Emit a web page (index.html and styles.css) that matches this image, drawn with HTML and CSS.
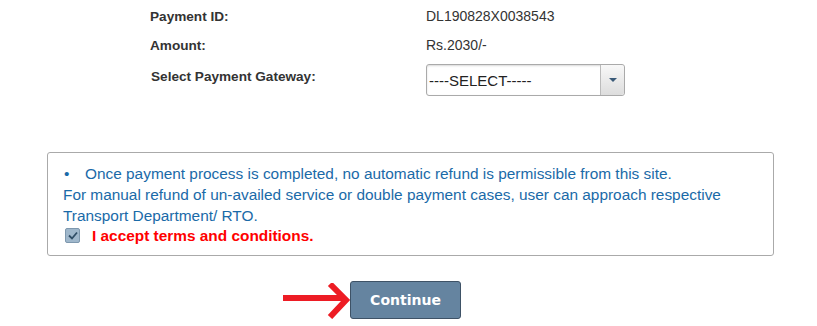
FILE: index.html
```html
<!DOCTYPE html>
<html>
<head>
<meta charset="utf-8">
<link rel="stylesheet" href="styles.css">
</head>
<body>
<div class="page">
  <div class="details">
    <div class="row"><div class="label">Payment ID:</div><div class="value">DL190828X0038543</div></div>
    <div class="row"><div class="label">Amount:</div><div class="value">Rs.2030/-</div></div>
    <div class="row gw"><div class="label">Select Payment Gateway:</div>
      <div class="select"><span class="sel-text">----SELECT-----</span><span class="sel-btn"><span class="caret"></span></span></div>
    </div>
  </div>
  <div class="notice">
    <div class="bullet"><span class="dot">•</span>Once payment process is completed, no automatic refund is permissible from this site.</div>
    <div class="para">For manual refund of un-availed service or double payment cases, user can approach respective Transport Department/ RTO.</div>
    <div class="accept"><span class="check"><svg width="10" height="9" viewBox="0 0 10 9"><path d="M1 4.5 L4 7.5 L9 1.5" fill="none" stroke="#2f4d66" stroke-width="1.8"/></svg></span><span class="terms">I accept terms and conditions.</span></div>
  </div>
  <div class="actions">
    <svg class="arrow" width="68" height="36" viewBox="0 0 68 36"><path d="M0 15 H60" stroke="#ed1c24" stroke-width="6"/><path d="M47 1 L63 17 L47 34" fill="none" stroke="#ed1c24" stroke-width="6"/></svg>
    <button class="btn">Continue</button>
  </div>
</div>
</body>
</html>
```
FILE: styles.css
```css
html, body { margin: 0; padding: 0; background: #fff; }
body { font-family: "Liberation Sans", Arial, sans-serif; width: 817px; height: 326px; overflow: hidden; }
.page { padding-top: 6px; }
.details { padding-left: 150px; }
.row { display: flex; align-items: center; height: 20px; margin-bottom: 9px; }
.label { width: 276px; font-weight: bold; font-size: 13.6px; color: #333; }
.value { font-size: 14px; color: #333; }
.row.gw { height: 32px; align-items: flex-start; margin-top: 3px; }
.row.gw .label { padding-top: 5px; padding-left: 1px; width: 275px; }
.select { width: 197px; height: 30px; border: 1px solid #aaa; border-radius: 3px; display: flex; box-shadow: inset 0 1px 2px rgba(0,0,0,0.15); }
.sel-text { flex: 1; font-size: 15px; color: #222; line-height: 31px; padding-left: 2px; }
.sel-btn { width: 23px; border-left: 1px solid #bbb; background: linear-gradient(#f8f8f8, #ddd); display: flex; align-items: center; justify-content: center; border-radius: 0 3px 3px 0; }
.caret { width: 0; height: 0; border-left: 4px solid transparent; border-right: 4px solid transparent; border-top: 4px solid #3a5a78; }
.notice { margin: 56px 0 0 47px; width: 710px; height: 87px; border: 1px solid #aaa; border-radius: 3px; padding: 10px 0 5px 15px; color: #1a6aa8; font-size: 15.4px; line-height: 21px; }
.bullet { display: flex; }
.dot { width: 22px; padding-left: 1px; box-sizing: border-box; }
.para { width: 690px; }
.accept { display: flex; align-items: center; height: 19px; }
.check { width: 13px; height: 13px; background: #9fb7cb; border: 1px solid #7e98ae; border-radius: 2px; display: flex; align-items: center; justify-content: center; margin: 0 12px 0 2px; }
.terms { color: #f00; font-weight: bold; font-size: 15.4px; }
.actions { display: flex; align-items: center; margin: 25px 0 0 283px; }
.arrow { display: block; margin-top: 2px; }
.btn { width: 111px; height: 38px; margin-left: -1px; background: #6584a0; color: #fff; border: 1px solid #3e5266; border-radius: 3px; font-family: "DejaVu Sans", Verdana, sans-serif; font-weight: bold; font-size: 14px; }
```
